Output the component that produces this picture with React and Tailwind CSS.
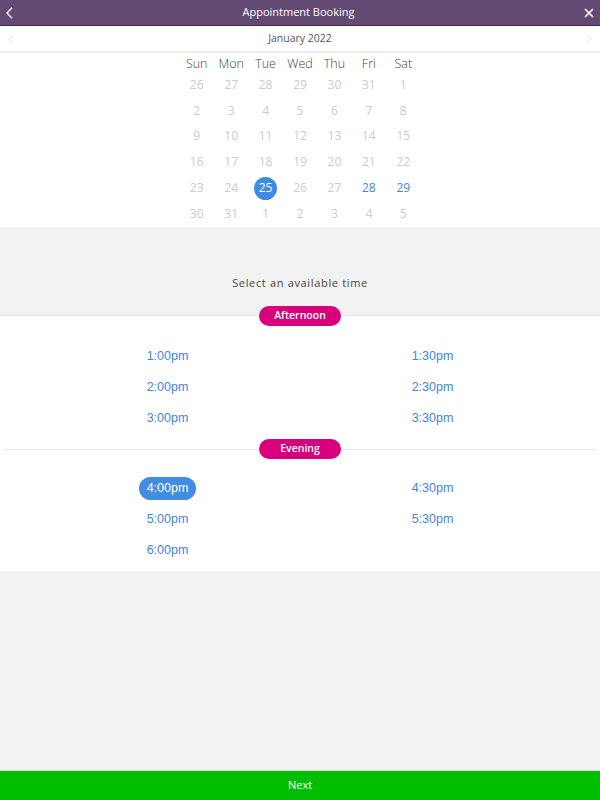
const days = ["Sun", "Mon", "Tue", "Wed", "Thu", "Fri", "Sat"];

const weeks = [
  [26, 27, 28, 29, 30, 31, 1],
  [2, 3, 4, 5, 6, 7, 8],
  [9, 10, 11, 12, 13, 14, 15],
  [16, 17, 18, 19, 20, 21, 22],
  [23, 24, 25, 26, 27, 28, 29],
  [30, 31, 1, 2, 3, 4, 5],
];

const groups = [
  { name: "Afternoon", slots: ["1:00pm", "1:30pm", "2:00pm", "2:30pm", "3:00pm", "3:30pm"] },
  { name: "Evening", slots: ["4:00pm", "4:30pm", "5:00pm", "5:30pm", "6:00pm"] },
];

function Chevron({ dir = "left", className = "" }) {
  return (
    <svg viewBox="0 0 8 14" className={className} fill="none" stroke="currentColor">
      {dir === "left" ? <path d="M7 1 1 7l6 6" /> : <path d="m1 1 6 6-6 6" />}
    </svg>
  );
}

function Pill({ children }) {
  return (
    <span className="relative z-10 flex h-[20px] w-[82px] items-center justify-center rounded-full bg-[#d9007e] text-[10.5px] text-white font-['Open_Sans',sans-serif] font-semibold">
      {children}
    </span>
  );
}

function SlotGrid({ slots, selected }) {
  return (
    <div className="grid grid-cols-2 px-[35px]">
      {slots.map((s) => (
        <div key={s} className="flex h-[31px] items-center justify-center">
          <span
            className={
              s === selected
                ? "rounded-full bg-[#428de0] px-[8px] py-[2px] text-[12.5px] text-white font-['Liberation_Sans',Arial,sans-serif]"
                : "text-[12.5px] text-[#3f86de] font-['Liberation_Sans',Arial,sans-serif]"
            }
          >
            {s}
          </span>
        </div>
      ))}
    </div>
  );
}

export default function App() {
  return (
    <div className="flex min-h-[800px] w-[600px] flex-col bg-[#f2f2f2] font-['Open_Sans',sans-serif]">
      {/* top bar */}
      <header className="flex h-[26px] items-center justify-between border-b border-[#43275a] bg-[#634a73] px-[6px] text-white">
        <Chevron className="h-[12px] w-[7px] stroke-[1.6]" />
        <span className="text-[11px] font-medium">Appointment Booking</span>
        <svg viewBox="0 0 10 10" className="h-[10px] w-[10px]" stroke="currentColor" strokeWidth="1.7">
          <path d="M1 1l8 8M9 1 1 9" />
        </svg>
      </header>

      {/* month switcher */}
      <div className="flex h-[27px] items-center justify-between border-b-2 border-[#ececec] bg-white px-[8px] pt-[1px]">
        <Chevron className="h-[11px] w-[6px] text-[#d3d9e0] stroke-[1]" />
        <span className="text-[10.5px] text-[#555]">January 2022</span>
        <Chevron dir="right" className="h-[11px] w-[6px] text-[#d3d9e0] stroke-[1]" />
      </div>

      {/* calendar */}
      <div className="flex justify-center bg-white">
        <div className="w-[241px]">
          <div className="grid h-[19px] grid-cols-7 items-center pt-[2px] text-center text-[12.5px] font-light text-[#444]">
            {days.map((d) => (
              <span key={d}>{d}</span>
            ))}
          </div>
          {weeks.map((w, wi) => (
            <div key={wi} className="grid h-[25.8px] grid-cols-7 items-center text-center text-[12px]">
              {w.map((n, i) => {
                const sel = wi === 4 && n === 25;
                const open = wi === 4 && (n === 28 || n === 29);
                return (
                  <div key={i} className="flex justify-center">
                    {sel ? (
                      <span className="flex h-[23px] w-[23px] items-center justify-center rounded-full bg-[#3f8ae2] text-white">
                        {n}
                      </span>
                    ) : (
                      <span className={open ? "text-[#3f86de]" : "text-[#c9ccd1]"}>{n}</span>
                    )}
                  </div>
                );
              })}
            </div>
          ))}
        </div>
      </div>

      {/* prompt */}
      <div className="flex h-[88px] items-end justify-center pb-[23px]">
        <span className="text-[11px] tracking-[0.06em] text-[#444]">Select an available time</span>
      </div>

      {/* slots */}
      <section className="border-t border-[#e6e6e6] bg-white pb-[5px]">
        <div className="-mt-[10px] flex justify-center">
          <Pill>{groups[0].name}</Pill>
        </div>
        <div className="mt-[15px]">
          <SlotGrid slots={groups[0].slots} />
        </div>
        <div className="relative mt-[5px] flex justify-center">
          <div className="absolute inset-x-[5px] top-1/2 border-t border-[#e3e7ec]" />
          <Pill>{groups[1].name}</Pill>
        </div>
        <div className="mt-[14px]">
          <SlotGrid slots={groups[1].slots} selected="4:00pm" />
        </div>
      </section>

      <div className="flex-1" />

      <button className="flex h-[30px] items-center justify-center border-t border-[#d9d9d9] bg-[#00bf00] text-[11px] text-white">
        Next
      </button>
    </div>
  );
}
